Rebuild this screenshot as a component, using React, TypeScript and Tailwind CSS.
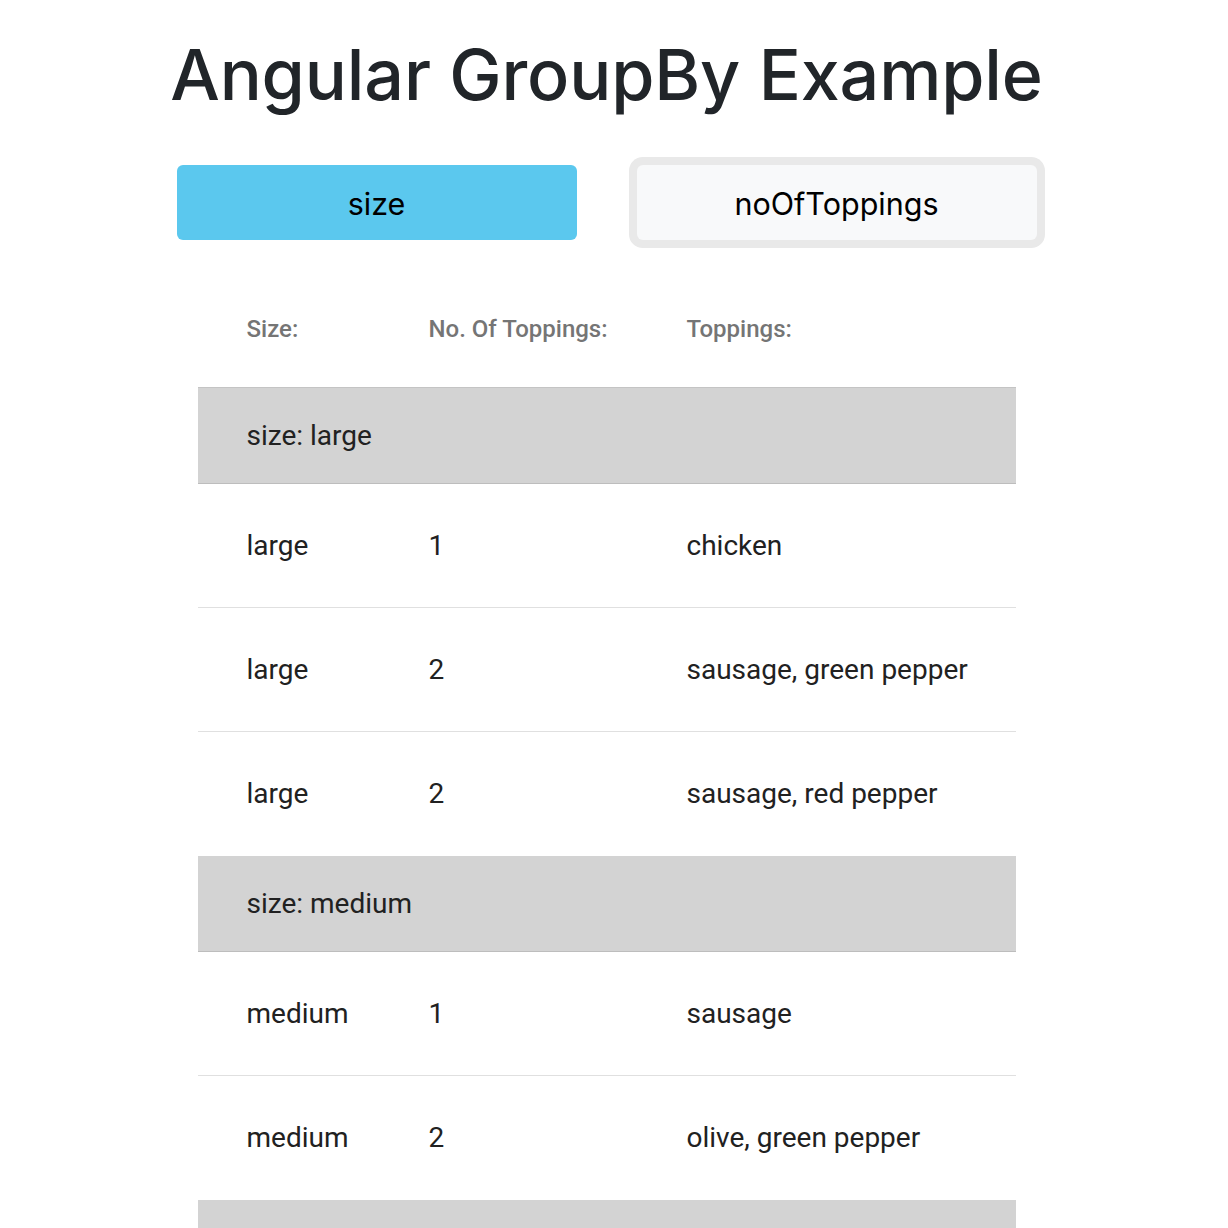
const groups = [
  {
    label: "size: large",
    rows: [
      { size: "large", count: 1, toppings: "chicken" },
      { size: "large", count: 2, toppings: "sausage, green pepper" },
      { size: "large", count: 2, toppings: "sausage, red pepper" },
    ],
  },
  {
    label: "size: medium",
    rows: [
      { size: "medium", count: 1, toppings: "sausage" },
      { size: "medium", count: 2, toppings: "olive, green pepper" },
    ],
  },
  {
    label: "size: small",
    rows: [{ size: "small", count: 1, toppings: "olive" }],
  },
];

const App = (): JSX.Element => {
  return (
    <div className="w-[1213px] flex flex-col items-center bg-white pb-10">
      <h1 className="mt-[30px] font-['Inter',sans-serif] font-medium text-[70px] leading-[90px] text-[#212529] tracking-[-0.15px]">
        Angular GroupBy Example
      </h1>
      <div className="mt-[45px] flex flex-row gap-[60px] font-['Inter',sans-serif]">
        <button className="w-[400px] h-[75px] pt-[3px] rounded-[6px] bg-[#5bc8ee] text-[30.5px] text-black">
          size
        </button>
        <button className="w-[400px] h-[75px] pt-[3px] rounded-[6px] bg-[#f8f9fa] text-[30.5px] text-black ring-8 ring-[#e9e9e9]">
          noOfToppings
        </button>
      </div>
      <div className="mt-[30px] w-[818px] flex flex-col font-['Roboto',sans-serif]">
        <div className="h-[118px] flex flex-row items-center border-b border-[#c4c4c4] text-[24px] font-medium text-[#757575]">
          <div className="w-[231px] pl-[49px]">Size:</div>
          <div className="w-[258px]">No. Of Toppings:</div>
          <div className="flex-1">Toppings:</div>
        </div>
        {groups.map((g) => (
          <div key={g.label} className="flex flex-col">
            <div className="h-[96px] flex flex-row items-center pl-[49px] bg-[#d3d3d3] border-b border-[#bdbdbd] text-[28px] text-[#212121]">
              {g.label}
            </div>
            {g.rows.map((r, i) => (
              <div
                key={i}
                className={
                  i === g.rows.length - 1
                    ? "h-[124px] flex flex-row items-center text-[28px] text-[#212121]"
                    : "h-[124px] flex flex-row items-center border-b border-[#e0e0e0] text-[28px] text-[#212121]"
                }
              >
                <div className="w-[231px] pl-[49px]">{r.size}</div>
                <div className="w-[258px]">{r.count}</div>
                <div className="flex-1">{r.toppings}</div>
              </div>
            ))}
          </div>
        ))}
      </div>
    </div>
  );
};

export default App;
